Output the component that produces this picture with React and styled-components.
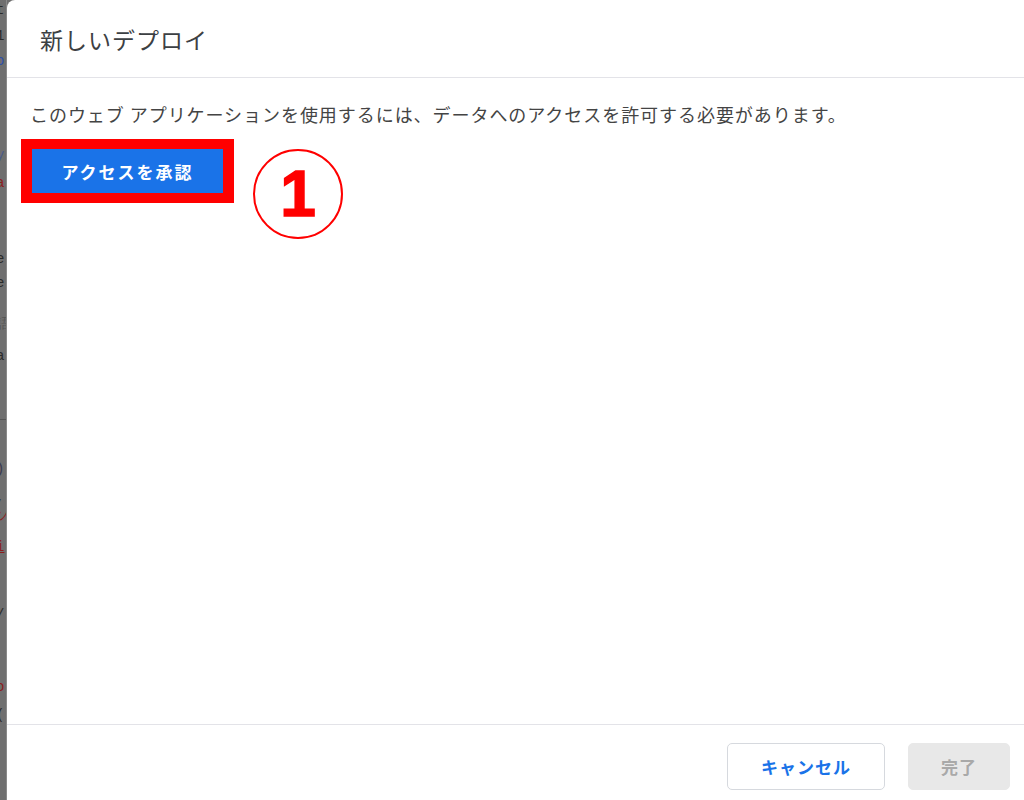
import React from 'react';
import styled, { createGlobalStyle } from 'styled-components';

const GlobalStyle = createGlobalStyle`
  html, body {
    margin: 0;
    padding: 0;
    background: #fff;
  }
  body {
    font-family: "Noto Sans CJK JP", "Noto Sans", sans-serif;
  }
`;

const Page = styled.div`
  display: flex;
  width: 1024px;
  height: 800px;
  overflow: hidden;
  background: #6f6f6f;
`;

const Backdrop = styled.div`
  width: 7px;
  flex: none;
  display: flex;
  flex-direction: column;
  overflow: hidden;
  background: #6f6f6f;
  border-right: 1px solid #8a8a8a;
  box-sizing: border-box;
`;

const CodeLine = styled.div`
  margin-top: ${p => p.top}px;
  margin-left: ${p => p.shift || -4}px;
  height: 14px;
  font-family: "Liberation Mono", monospace;
  font-size: 14px;
  line-height: 14px;
  white-space: nowrap;
  color: ${p => p.color || '#2a2a2a'};
  text-decoration: ${p => p.underline ? 'underline' : 'none'};
`;

const Rule = styled.div`
  margin-top: ${p => p.top}px;
  height: 1px;
  background: #555;
`;

const Dialog = styled.div`
  flex: 1;
  display: flex;
  flex-direction: column;
  background: #fff;
  border-top-left-radius: 8px;
`;

const Header = styled.div`
  height: 78px;
  display: flex;
  align-items: center;
  padding-left: 33px;
  border-bottom: 1px solid #e3e3e8;
  box-sizing: border-box;
`;

const Title = styled.h1`
  margin: 0;
  font-size: 23px;
  font-weight: 400;
  letter-spacing: 1px;
  color: #3c4043;
`;

const Body = styled.div`
  flex: 1;
  padding: 23px 0 0 14px;
`;

const Description = styled.p`
  margin: 0 0 12px 9px;
  font-size: 18px;
  line-height: 26px;
  letter-spacing: 0.95px;
  color: #444;
`;

const StepRow = styled.div`
  display: flex;
  align-items: flex-start;
  gap: 19px;
`;

const Highlight = styled.div`
  border: 11px solid #ff0000;
  border-top-width: 10px;
  border-bottom-width: 10px;
`;

const PrimaryButton = styled.button`
  width: 191px;
  height: 44px;
  border: none;
  border-radius: 0;
  background: #1a73e8;
  color: #fff;
  font-family: inherit;
  font-size: 17px;
  font-weight: 700;
  letter-spacing: 2px;
  padding: 0;
`;

const StepBadge = styled.div`
  margin-top: 10px;
  width: 86px;
  height: 86px;
  border: 2px solid #ff0000;
  border-radius: 50%;
  display: flex;
  align-items: center;
  justify-content: center;
  color: #ff0000;
  font-family: "Liberation Sans", Arial, sans-serif;
  font-size: 64px;
  font-weight: 900;
  line-height: 1;
  -webkit-text-stroke: 1.5px #ff0000;
`;

const Footer = styled.div`
  height: 76px;
  display: flex;
  justify-content: flex-end;
  align-items: flex-start;
  gap: 23px;
  padding: 18px 14px 0 0;
  border-top: 1px solid #e3e3e8;
  box-sizing: border-box;
`;

const FooterButton = styled.button`
  height: 47px;
  width: ${p => p.width}px;
  border-radius: 5px;
  border: 1px solid ${p => p.disabled ? '#e8e8e8' : '#d6d9de'};
  background: ${p => p.disabled ? '#e8e8e8' : '#fff'};
  color: ${p => p.disabled ? '#a9a9a9' : '#1a73e8'};
  font-family: inherit;
  font-size: 17px;
  font-weight: 700;
  letter-spacing: 1px;
  padding: 0;
`;

const codeLines = [
  { top: 3, text: 't' },
  { top: 12, text: '1' },
  { top: 11, text: 'o', color: '#2d4ea8' },
  { top: 80, text: 'y', color: '#4a5a8a' },
  { top: 14, text: 'a', color: '#8b1d1d' },
  { top: 62, text: 'e' },
  { top: 10, text: 'e' },
  { top: 27, text: '語', color: '#555' },
  { top: 18, text: 'a' },
];

const codeLines2 = [
  { top: 42, text: ')', color: '#3a3a50' },
  { top: 14, text: ',' },
  { top: 4, text: 'ソ', color: '#8b1d1d' },
  { top: 18, text: 'i', color: '#8b1d1d', underline: true },
  { top: 54, text: '/' },
  { top: 58, text: 'o', color: '#8b1d1d' },
  { top: 14, text: '(' },
];

const App = () => {
  return (
    <>
      <GlobalStyle />
      <Page>
        <Backdrop>
          {codeLines.map((l, i) => (
            <CodeLine key={i} top={l.top} color={l.color}>{l.text}</CodeLine>
          ))}
          <Rule top={56} />
          {codeLines2.map((l, i) => (
            <CodeLine key={i} top={l.top} color={l.color} underline={l.underline}>{l.text}</CodeLine>
          ))}
        </Backdrop>
        <Dialog>
          <Header>
            <Title>新しいデプロイ</Title>
          </Header>
          <Body>
            <Description>
              このウェブ アプリケーションを使用するには、データへのアクセスを許可する必要があります。
            </Description>
            <StepRow>
              <Highlight>
                <PrimaryButton>アクセスを承認</PrimaryButton>
              </Highlight>
              <StepBadge>1</StepBadge>
            </StepRow>
          </Body>
          <Footer>
            <FooterButton width={158}>キャンセル</FooterButton>
            <FooterButton width={102} disabled>完了</FooterButton>
          </Footer>
        </Dialog>
      </Page>
    </>
  );
};

export default App;
